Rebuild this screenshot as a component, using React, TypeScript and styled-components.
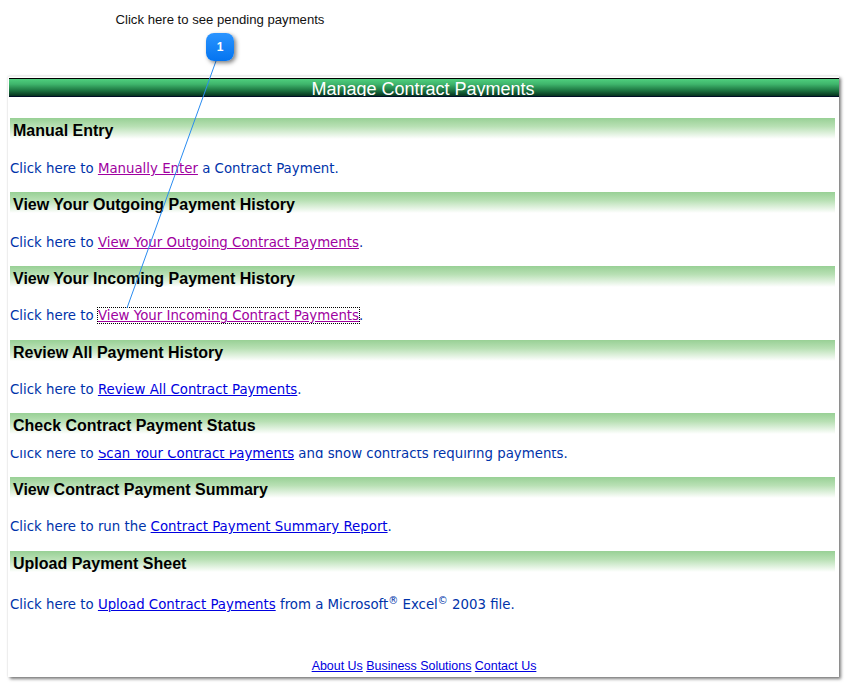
import { createGlobalStyle, styled } from "styled-components";

const GlobalStyle = createGlobalStyle`
  html, body {
    margin: 0;
    padding: 0;
    background: #fff;
  }
  body {
    font-family: "Liberation Sans", Arial, sans-serif;
    overflow: hidden;
  }
`;

const Page = styled.div`
  position: relative;
  width: 848px;
  height: 685px;
  overflow: hidden;
`;

const CaptionArea = styled.div`
  height: 76px;
  box-sizing: border-box;
  width: 440px;
  padding-top: 12px;
  text-align: center;
  font-size: 13.15px;
  line-height: 16px;
  color: #111;
`;

const Badge = styled.div`
  position: absolute;
  left: 206px;
  top: 33px;
  width: 28px;
  height: 28px;
  border-radius: 8px;
  background: linear-gradient(#2a94ff, #0474f0);
  box-shadow: 2px 2px 4px rgba(0, 0, 0, 0.5);
  color: #fff;
  font-size: 12px;
  font-weight: 700;
  line-height: 28px;
  text-align: center;
  z-index: 3;
`;

const Leader = styled.svg`
  position: absolute;
  left: 0;
  top: 0;
  z-index: 2;
  pointer-events: none;
`;

const Window = styled.div`
  margin-left: 8px;
  width: 831px;
  height: 601px;
  box-sizing: border-box;
  padding: 1px 0 0 1px;
  background: #fff;
  border-top: 1px solid #f2f2f2;
  box-shadow: 2px 2px 3px rgba(0, 0, 0, 0.5), 0 0 2px rgba(0, 0, 0, 0.12);
  display: flex;
  flex-direction: column;
`;

const TitleBar = styled.div`
  height: 17px;
  border-top: 1px solid #000;
  border-bottom: 1px solid #001028;
  background: linear-gradient(#4fcf7e 0%, #3fb56c 30%, #1f7a44 65%, #06331f 100%);
  color: #fff;
  font-size: 18px;
  line-height: 20px;
  text-align: center;
  padding-right: 2px;
  overflow: hidden;
`;

const Content = styled.div`
  display: flex;
  flex-direction: column;
  padding-top: 21px;
  flex: 1;
`;

const Section = styled.section<{ $height: number }>`
  height: ${(p) => p.$height}px;
  display: flex;
  flex-direction: column;
`;

const Heading = styled.h2`
  margin: 0 4px 0 1px;
  height: 21px;
  padding-left: 3px;
  background: linear-gradient(#98d095 0%, #b8e0b4 40%, #ffffff 100%);
  color: #000;
  font-size: 16px;
  font-weight: 700;
  line-height: 26px;
  letter-spacing: 0;
`;

const Body = styled.p<{ $top: number }>`
  margin: ${(p) => p.$top}px 0 0 1px;
  font-family: "DejaVu Sans", Verdana, sans-serif;
  font-size: 13.33px;
  line-height: 16px;
  color: #0033aa;
  white-space: nowrap;
`;

const ClippedBody = styled.div`
  margin: 16px 0 0 1px;
  height: 12px;
  overflow: hidden;
  font-family: "DejaVu Sans", Verdana, sans-serif;
  font-size: 13.33px;
  line-height: 16px;
  color: #0033aa;
  white-space: nowrap;
`;

const ClippedLine = styled.div`
  margin-top: -4px;
`;

const Link = styled.a<{ $visited?: boolean; $focused?: boolean }>`
  color: ${(p) => (p.$visited ? "#a000a0" : "#0000e0")};
  text-decoration: underline;
  outline: ${(p) => (p.$focused ? "1px dotted #000" : "none")};
  outline-offset: 0;
  cursor: pointer;
`;

const Sup = styled.sup`
  font-size: 10px;
  line-height: 0;
`;

const Footer = styled.div`
  text-align: center;
  font-size: 12.45px;
  line-height: 14px;
  margin-top: 30px;
`;

const FooterLink = styled.a`
  color: #0000e0;
  text-decoration: underline;
`;

export default function App() {
  return (
    <Page>
      <GlobalStyle />
      <CaptionArea>Click here to see pending payments</CaptionArea>
      <Badge>1</Badge>
      <Leader width="848" height="685">
        <line x1="216" y1="61" x2="127" y2="308" stroke="#2a8cf0" strokeWidth="1" />
      </Leader>
      <Window>
        <TitleBar>Manage Contract Payments</TitleBar>
        <Content>
          <Section $height={74}>
            <Heading>Manual Entry</Heading>
            <Body $top={22}>
              Click here to <Link $visited>Manually Enter</Link> a Contract Payment.
            </Body>
          </Section>
          <Section $height={74}>
            <Heading>View Your Outgoing Payment History</Heading>
            <Body $top={22}>
              Click here to <Link $visited>View Your Outgoing Contract Payments</Link>.
            </Body>
          </Section>
          <Section $height={74}>
            <Heading>View Your Incoming Payment History</Heading>
            <Body $top={21}>
              Click here to <Link $visited $focused>View Your Incoming Contract Payments</Link>.
            </Body>
          </Section>
          <Section $height={73}>
            <Heading>Review All Payment History</Heading>
            <Body $top={21}>
              Click here to <Link>Review All Contract Payments</Link>.
            </Body>
          </Section>
          <Section $height={64}>
            <Heading>Check Contract Payment Status</Heading>
            <ClippedBody>
              <ClippedLine>
                Click here to <Link>Scan Your Contract Payments</Link> and show contracts requiring payments.
              </ClippedLine>
            </ClippedBody>
          </Section>
          <Section $height={74}>
            <Heading>View Contract Payment Summary</Heading>
            <Body $top={21}>
              Click here to run the <Link>Contract Payment Summary Report</Link>.
            </Body>
          </Section>
          <Section $height={78}>
            <Heading>Upload Payment Sheet</Heading>
            <Body $top={25}>
              Click here to <Link>Upload Contract Payments</Link> from a Microsoft<Sup>®</Sup> Excel<Sup>©</Sup> 2003 file.
            </Body>
          </Section>
          <Footer>
            <FooterLink>About Us</FooterLink> <FooterLink>Business Solutions</FooterLink>{" "}
            <FooterLink>Contact Us</FooterLink>
          </Footer>
        </Content>
      </Window>
    </Page>
  );
}
